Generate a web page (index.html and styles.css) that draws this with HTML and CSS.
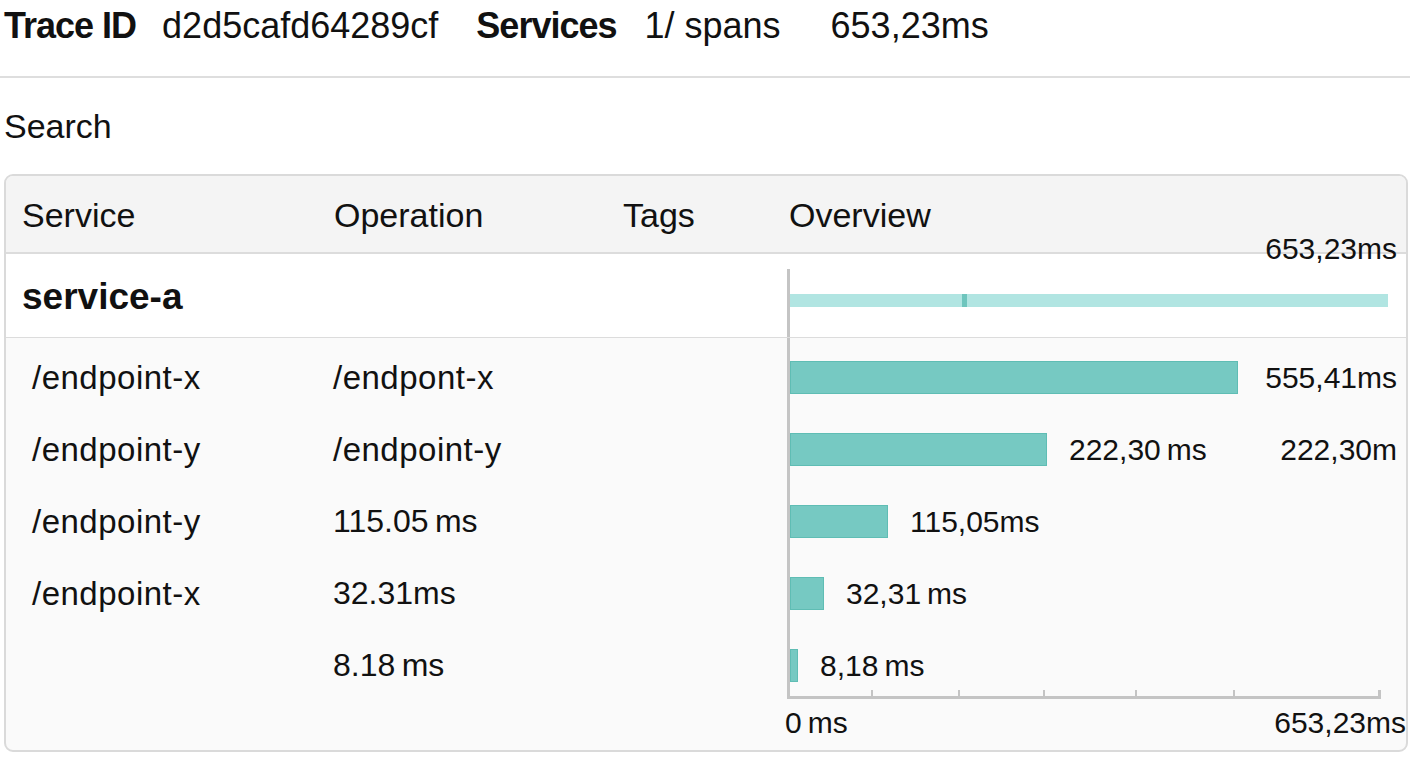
FILE: index.html
```html
<!DOCTYPE html>
<html lang="en">
<head>
<meta charset="utf-8">
<title>Trace d2d5cafd64289cf</title>
<link rel="stylesheet" href="styles.css">
</head>
<body>
<div class="page">
  <header class="trace-header">
    <span class="lbl lbl-trace">Trace ID</span>
    <span class="val val-id">d2d5cafd64289cf</span>
    <span class="lbl lbl-services">Services</span>
    <span class="val val-spans">1/ spans</span>
    <span class="val">653,23ms</span>
  </header>

  <div class="search">Search</div>

  <section class="card">
    <div class="row head">
      <div class="c">Service</div>
      <div class="c">Operation</div>
      <div class="c">Tags</div>
      <div class="c">Overview</div>
    </div>

    <span class="total-top">653,23ms</span>

    <div class="row service">
      <div class="c svc-name">service-a</div>
      <div class="c"></div>
      <div class="c"></div>
      <div class="c ov">
        <div class="axis-cell">
          <div class="svc-bar"><span class="marker"></span></div>
        </div>
      </div>
    </div>

    <div class="row span">
      <div class="c svc path">/endpoint-x</div>
      <div class="c op path">/endpont-x</div>
      <div class="c"></div>
      <div class="c ov"><div class="axis-cell"><div class="bar" style="width:448px"></div><span class="dur push">555,41ms</span></div></div>
    </div>
    <div class="row span">
      <div class="c svc path">/endpoint-y</div>
      <div class="c op path">/endpoint-y</div>
      <div class="c"></div>
      <div class="c ov"><div class="axis-cell"><div class="bar" style="width:257px"></div><span class="dur">222,30&#8201;ms</span><span class="dur push">222,30m</span></div></div>
    </div>
    <div class="row span">
      <div class="c svc path">/endpoint-y</div>
      <div class="c op">115.05&#8201;ms</div>
      <div class="c"></div>
      <div class="c ov"><div class="axis-cell"><div class="bar" style="width:98px"></div><span class="dur">115,05ms</span></div></div>
    </div>
    <div class="row span">
      <div class="c svc path">/endpoint-x</div>
      <div class="c op">32.31ms</div>
      <div class="c"></div>
      <div class="c ov"><div class="axis-cell"><div class="bar" style="width:34px"></div><span class="dur">32,31&#8201;ms</span></div></div>
    </div>
    <div class="row span">
      <div class="c svc"></div>
      <div class="c op">8.18&#8201;ms</div>
      <div class="c"></div>
      <div class="c ov"><div class="axis-cell"><div class="bar" style="width:8px"></div><span class="dur">8,18&#8201;ms</span></div></div>
    </div>

    <div class="row axis-row">
      <div class="c ov">
        <svg class="axis" width="596" height="9" viewBox="0 0 596 9">
          <rect x="0" y="0" width="3" height="9" fill="#c4c4c4"/>
          <rect x="0" y="6" width="594" height="3" fill="#c4c4c4"/>
          <rect x="84" y="0" width="2" height="7" fill="#c4c4c4"/>
          <rect x="171" y="0" width="2" height="7" fill="#c4c4c4"/>
          <rect x="256" y="0" width="2" height="7" fill="#c4c4c4"/>
          <rect x="348" y="0" width="2" height="7" fill="#c4c4c4"/>
          <rect x="446" y="0" width="2" height="7" fill="#c4c4c4"/>
          <rect x="591" y="0" width="3" height="7" fill="#c4c4c4"/>
        </svg>
        <div class="axis-labels">
          <span>0&#8201;ms</span>
          <span>653,23ms</span>
        </div>
      </div>
    </div>
  </section>
</div>
</body>
</html>
```

FILE: styles.css
```css
* {
  box-sizing: border-box;
}

body {
  margin: 0;
  background: #ffffff;
  color: #111111;
  font-family: "Liberation Sans", Arial, Helvetica, sans-serif;
}

.page {
  width: 1410px;
}

/* ---------- top header ---------- */
.trace-header {
  display: flex;
  align-items: baseline;
  padding: 5px 0 29px 4px;
  border-bottom: 2px solid #dedede;
  font-size: 36px;
  line-height: normal;
  white-space: nowrap;
}

.trace-header .lbl {
  font-weight: 700;
  letter-spacing: -1px;
}

.lbl-trace {
  margin-right: 26px;
}

.val-id {
  margin-right: 38px;
}

.lbl-services {
  margin-right: 28px;
}

.val-spans {
  margin-right: 50px;
}

/* ---------- search ---------- */
.search {
  margin: 29px 0 0 4px;
  font-size: 34px;
  line-height: normal;
}

/* ---------- card / table ---------- */
.card {
  position: relative;
  margin: 28px 0 0 4px;
  width: 1404px;
  border: 2px solid #dadada;
  border-radius: 9px;
  background: #fafafa;
  overflow: hidden;
}

.row {
  display: grid;
  grid-template-columns: 312px 289px 166px 1fr;
}

.head {
  background: #f4f4f4;
  border-bottom: 2px solid #dcdcdc;
  padding: 20px 0 17px;
  font-size: 34px;
  line-height: normal;
}

.head .c {
  padding-left: 16px;
}

.total-top {
  position: absolute;
  top: 56px;
  right: 9px;
  font-size: 30px;
  line-height: 34px;
}

/* service row */
.service {
  height: 84px;
  background: #ffffff;
  border-bottom: 1px solid #dcdcdc;
}

.svc-name {
  align-self: center;
  padding: 2px 0 0 16px;
  font-size: 37px;
  font-weight: 700;
}

.ov {
  padding: 0 9px 0 14px;
}

.service .ov {
  padding-top: 15px;
}

.axis-cell {
  height: 100%;
  border-left: 3px solid #c4c4c4;
}

.service .axis-cell {
  padding-top: 25px;
}

.svc-bar {
  position: relative;
  width: 598px;
  height: 13px;
  background: #b1e5e2;
}

.marker {
  position: absolute;
  left: 172px;
  top: 0;
  width: 5px;
  height: 13px;
  background: #6ec5bd;
}

/* span rows */
.span {
  height: 72px;
}

.span .svc,
.span .op {
  padding-top: 23px;
  font-size: 32px;
  line-height: 33px;
  white-space: nowrap;
}

.span .path {
  font-size: 33px;
  letter-spacing: 0.5px;
}

.span .svc {
  padding-left: 26px;
}

.span .op {
  padding-left: 15px;
}

.span .axis-cell {
  display: flex;
  align-items: center;
  padding: 23px 0 16px;
}

.bar {
  flex: none;
  height: 33px;
  background: #76c9c2;
  border: 1px solid #5fbdb4;
}

.dur {
  margin-left: 22px;
  font-size: 30px;
  line-height: 33px;
  white-space: nowrap;
}

.dur.push {
  margin-left: auto;
}

/* axis */
.axis-row .ov {
  grid-column: 4;
  padding: 0 0 10px 14px;
}

.axis {
  display: block;
  margin-top: -8px;
}

.axis-labels {
  display: flex;
  justify-content: space-between;
  margin: 7px 0 0 -2px;
  font-size: 30px;
  line-height: 34px;
}
```
